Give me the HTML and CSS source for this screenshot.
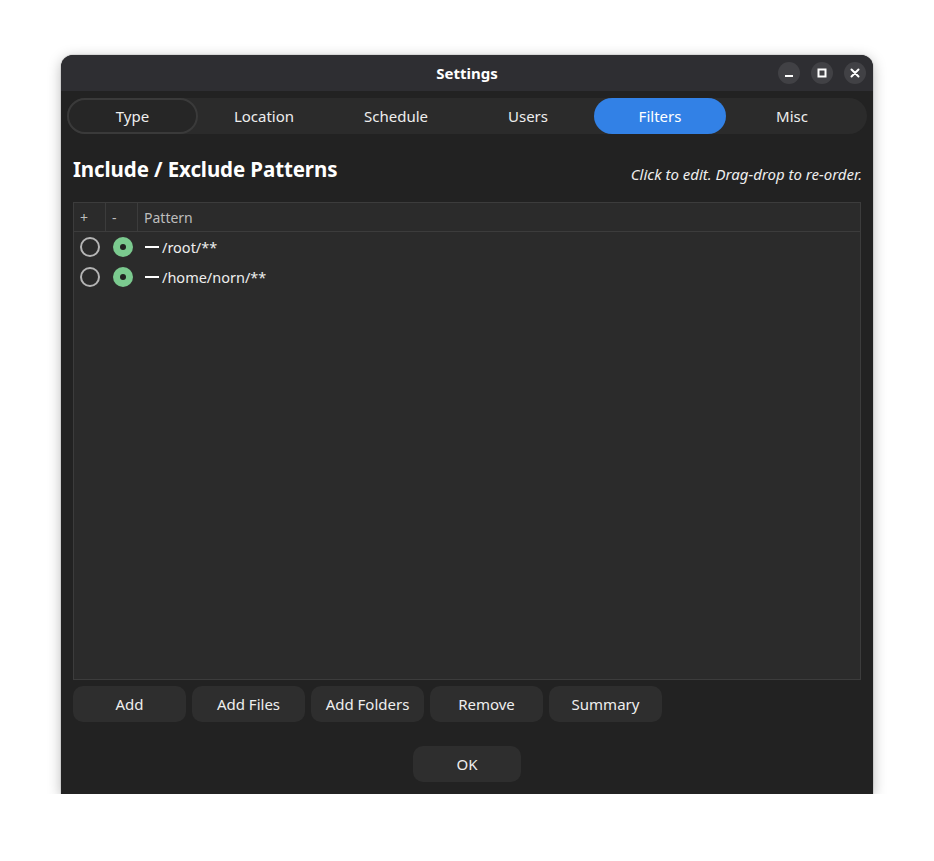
FILE: index.html
```html
<!DOCTYPE html>
<html>
<head>
<meta charset="utf-8">
<link rel="stylesheet" href="styles.css">
</head>
<body>
<div class="window">
  <div class="titlebar">
    <div class="title">Settings</div>
    <div class="wbtns">
      <span class="wbtn"><svg width="10" height="10" viewBox="0 0 10 10"><rect x="1" y="7" width="8" height="2" fill="#fff"/></svg></span>
      <span class="wbtn"><svg width="10" height="10" viewBox="0 0 10 10"><rect x="1.5" y="1.5" width="7" height="7" fill="none" stroke="#fff" stroke-width="2"/></svg></span>
      <span class="wbtn"><svg width="10" height="10" viewBox="0 0 10 10"><path d="M1.5 1.5L8.5 8.5M8.5 1.5L1.5 8.5" stroke="#fff" stroke-width="2" stroke-linecap="round"/></svg></span>
    </div>
  </div>
  <div class="body">
    <div class="tabs">
      <div class="tab focus">Type</div>
      <div class="tab">Location</div>
      <div class="tab">Schedule</div>
      <div class="tab">Users</div>
      <div class="tab active">Filters</div>
      <div class="tab">Misc</div>
    </div>
    <div class="content">
      <div class="headrow">
        <h1>Include / Exclude Patterns</h1>
        <span class="hint">Click to edit. Drag-drop to re-order.</span>
      </div>
      <div class="table">
        <div class="thead">
          <div class="c1">+</div>
          <div class="c2">-</div>
          <div class="c3">Pattern</div>
        </div>
        <div class="row">
          <div class="c1"><span class="radio"></span></div>
          <div class="c2"><span class="radio on"></span></div>
          <div class="c3"><span class="dash"></span>/root/**</div>
        </div>
        <div class="row">
          <div class="c1"><span class="radio"></span></div>
          <div class="c2"><span class="radio on"></span></div>
          <div class="c3"><span class="dash"></span>/home/norn/**</div>
        </div>
      </div>
      <div class="buttons">
        <button class="btn">Add</button>
        <button class="btn">Add Files</button>
        <button class="btn">Add Folders</button>
        <button class="btn">Remove</button>
        <button class="btn">Summary</button>
      </div>
      <div class="okrow">
        <button class="btn ok">OK</button>
      </div>
    </div>
  </div>
</div>
</body>
</html>
```
FILE: styles.css
```css
* { box-sizing: border-box; }
html, body { margin: 0; padding: 0; background: #ffffff; }
body {
  padding: 55px 0 0 61px;
  font-family: "Noto Sans", "Open Sans", sans-serif;
  color: #ffffff;
}
.window {
  width: 812px;
  height: 739px;
  background: #222222;
  border-radius: 12px 12px 0 0;
  box-shadow: 0 3px 14px rgba(0,0,0,0.28), 0 0 0 1px rgba(0,0,0,0.08);
  overflow: hidden;
  display: flex;
  flex-direction: column;
}
.titlebar {
  height: 36px;
  background: #2e2e32;
  display: flex;
  align-items: center;
  justify-content: center;
  position: relative;
}
.title {
  font-weight: 700;
  font-size: 15px;
  color: #ffffff;
}
.wbtns {
  position: absolute;
  right: 7px;
  top: 7px;
  display: flex;
  gap: 11px;
}
.wbtn {
  width: 22px;
  height: 22px;
  border-radius: 50%;
  background: #414145;
  display: flex;
  align-items: center;
  justify-content: center;
}
.body {
  flex: 1;
  padding: 7px 6px 12px 6px;
  display: flex;
  flex-direction: column;
}
.tabs {
  height: 36px;
  background: #2b2b2b;
  border-radius: 18px;
  display: flex;
}
.tab {
  width: 132px;
  height: 36px;
  border-radius: 18px;
  display: flex;
  align-items: center;
  justify-content: center;
  font-size: 15px;
  color: #eeeeee;
}
.tab.focus {
  width: 131px;
  border: 2px solid #3a3a3a;
  background: #262626;
}
.tab.active {
  background: #3281e6;
  color: #ffffff;
}
.content {
  flex: 1;
  padding: 0 6px;
  display: flex;
  flex-direction: column;
}
.headrow {
  height: 68px;
  display: flex;
  align-items: center;
  justify-content: space-between;
  padding-top: 2px;
}
h1 {
  margin: 0;
  font-size: 20.5px;
  font-weight: 700;
  color: #ffffff;
  letter-spacing: -0.1px;
}
.hint {
  font-style: italic;
  font-size: 15px;
  color: #eeeeee;
  margin-top: 10px;
  margin-right: -1px;
}
.table {
  width: 788px;
  height: 478px;
  background: #2b2b2b;
  border: 1px solid #3c3c3c;
}
.thead, .row {
  display: flex;
  height: 30px;
  align-items: stretch;
}
.thead {
  border-bottom: 1px solid #3c3c3c;
  height: 29px;
  font-size: 14px;
  color: #bdbdbd;
}
.thead .c1, .thead .c2 {
  border-right: 1px solid #3c3c3c;
}
.c1, .c2 {
  width: 32px;
  display: flex;
  align-items: center;
  padding-left: 6px;
}
.c3 {
  flex: 1;
  display: flex;
  align-items: center;
  padding-left: 6px;
}
.row .c1, .row .c2 {
  justify-content: center;
  padding-left: 0;
}
.row .c1 { padding-left: 0; }
.row .c2 { padding-left: 2px; }
.row .c3 {
  padding-left: 7px;
  font-size: 14.5px;
  color: #eeeeee;
}
.radio {
  width: 20px;
  height: 20px;
  border-radius: 50%;
  border: 2px solid #b4b4b4;
  display: block;
}
.radio.on {
  border: none;
  background: #7bca8f;
  position: relative;
}
.radio.on::after {
  content: "";
  position: absolute;
  left: 7px;
  top: 7px;
  width: 6px;
  height: 6px;
  border-radius: 50%;
  background: #222222;
}
.dash {
  display: inline-block;
  width: 14px;
  height: 2px;
  background: #ffffff;
  margin-right: 3px;
}
.buttons {
  display: flex;
  gap: 6px;
  margin-top: 6px;
}
.btn {
  width: 113px;
  height: 36px;
  border: none;
  border-radius: 10px;
  background: #2e2e2e;
  color: #eeeeee;
  font-family: "Noto Sans", "Open Sans", sans-serif;
  font-size: 15px;
  padding: 0;
}
.okrow {
  display: flex;
  justify-content: center;
  margin-top: 24px;
}
.btn.ok { width: 108px; }
```
